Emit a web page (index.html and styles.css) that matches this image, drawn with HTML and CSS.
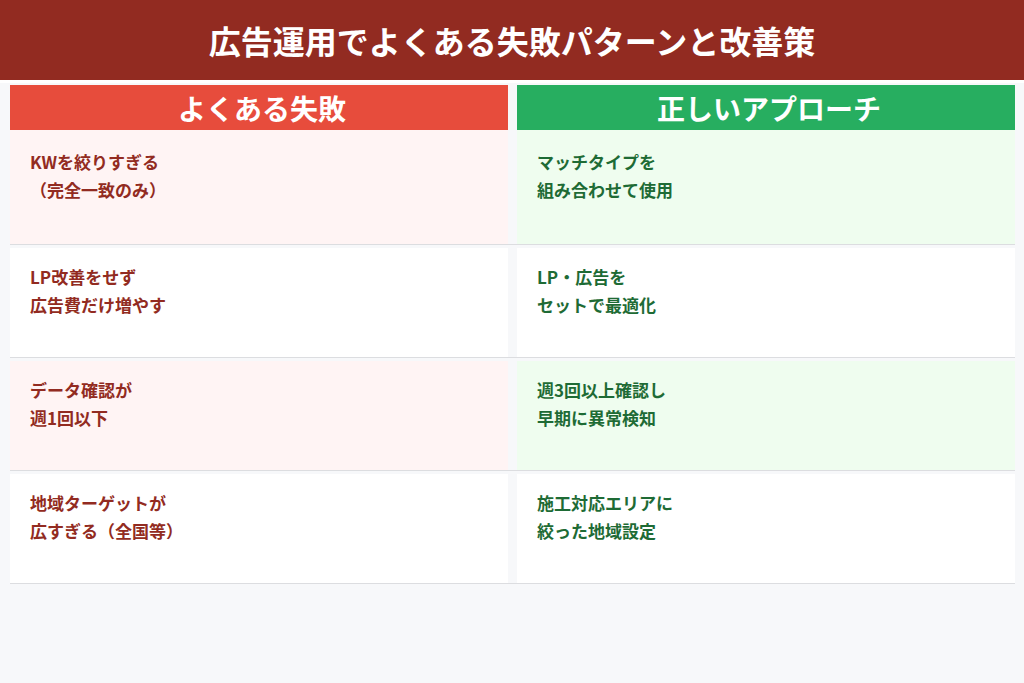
FILE: index.html
```html
<!DOCTYPE html>
<html lang="ja">
<head>
<meta charset="utf-8">
<link rel="stylesheet" href="styles.css">
</head>
<body>
<header class="title">広告運用でよくある失敗パターンと改善策</header>
<main class="table">
  <div class="row head">
    <div class="cell h bad">よくある失敗</div>
    <div class="cell h good">正しいアプローチ</div>
  </div>
  <div class="row first">
    <div class="cell bad-t tint-bad">KWを絞りすぎる<br>（完全一致のみ）</div>
    <div class="cell good-t tint-good">マッチタイプを<br>組み合わせて使用</div>
  </div>
  <div class="row">
    <div class="cell bad-t">LP改善をせず<br>広告費だけ増やす</div>
    <div class="cell good-t">LP・広告を<br>セットで最適化</div>
  </div>
  <div class="row">
    <div class="cell bad-t tint-bad">データ確認が<br>週1回以下</div>
    <div class="cell good-t tint-good">週3回以上確認し<br>早期に異常検知</div>
  </div>
  <div class="row">
    <div class="cell bad-t">地域ターゲットが<br>広すぎる（全国等）</div>
    <div class="cell good-t">施工対応エリアに<br>絞った地域設定</div>
  </div>
</main>
</body>
</html>
```
FILE: styles.css
```css
html, body {
  margin: 0;
  padding: 0;
  background: #f7f8fa;
  font-family: "Noto Sans CJK JP", "Noto Sans", sans-serif;
}
.title {
  height: 80px;
  background: #922b21;
  color: #ffffff;
  font-size: 32px;
  font-weight: 700;
  display: flex;
  align-items: center;
  justify-content: center;
  border-bottom: 3px solid #ffffff;
}
.table {
  padding: 2px 9px 0 10px;
  display: flex;
  flex-direction: column;
}
.row {
  display: flex;
  gap: 9px;
  border-bottom: 1px solid #dcdde0;
  padding-top: 3px;
}
.row.head {
  border-bottom: none;
  padding-top: 0;
}
.row.first {
  padding-top: 0;
}
.cell {
  flex: 1 1 0;
  background: #ffffff;
  box-sizing: border-box;
  height: 109px;
  padding: 15px 20px;
  font-size: 17px;
  line-height: 28px;
  font-weight: 700;
}
.row.first .cell {
  height: 114px;
  padding-top: 18px;
}
.cell.h {
  height: 45px;
  padding: 0 0 0 6px;
  display: flex;
  align-items: center;
  justify-content: center;
  color: #ffffff;
  font-size: 28px;
  font-weight: 700;
}
.cell.bad { background: #e74c3c; }
.cell.good { background: #27ae60; }
.bad-t { color: #922b21; }
.good-t { color: #1e6b35; }
.tint-bad { background: #fff4f4; }
.tint-good { background: #effdef; }
```
